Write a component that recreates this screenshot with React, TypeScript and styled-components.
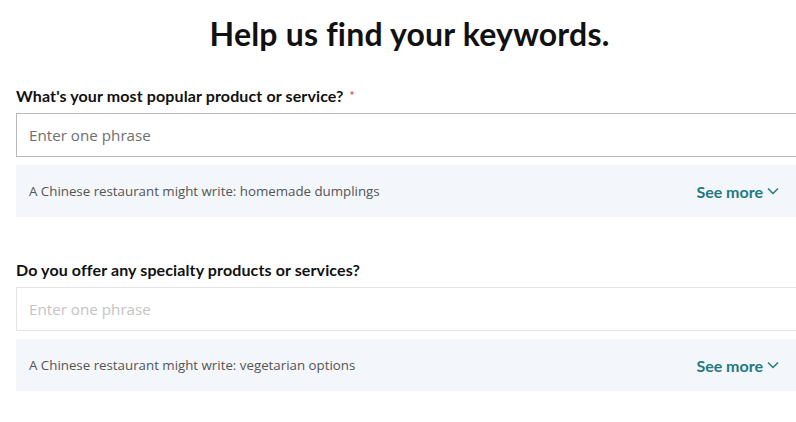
import React from "react";
import styled, { createGlobalStyle } from "styled-components";

const Global = createGlobalStyle`
  html, body { margin: 0; padding: 0; background: #fff; overflow: hidden; }
  * { box-sizing: border-box; }
`;

const Page = styled.div`
  width: 796px;
  height: 422px;
  overflow: hidden;
  padding-left: 16px;
`;

const Content = styled.div`
  width: 787px;
  display: flex;
  flex-direction: column;
`;

const Title = styled.h1`
  margin: 14px 0 0;
  text-align: center;
  font-family: "Lato", "Noto Sans", sans-serif;
  font-weight: 700;
  font-size: 32px;
  line-height: 40px;
  color: #111;
  letter-spacing: 0.2px;
`;

const Field = styled.div<{ $gap: number }>`
  margin-top: ${(p) => p.$gap}px;
  display: flex;
  flex-direction: column;
`;

const Label = styled.label`
  font-family: "Lato", "Noto Sans", sans-serif;
  font-weight: 700;
  font-size: 16px;
  line-height: 22px;
  letter-spacing: 0.12px;
  color: #111;
  margin-bottom: 6px;
`;

const Req = styled.span`
  color: #e2533f;
  margin-left: 6px;
  font-size: 12px;
  vertical-align: top;
`;

const Input = styled.input<{ $muted?: boolean }>`
  height: 44px;
  width: 100%;
  border: 1px solid ${(p) => (p.$muted ? "#e4e4e4" : "#b8b8b8")};
  border-radius: 0;
  padding: 0 12px;
  font-family: "Open Sans", "Noto Sans", sans-serif;
  font-size: 15.2px;
  color: #111;
  outline: none;
  background: #fff;
  &::placeholder {
    color: ${(p) => (p.$muted ? "#c4c4c4" : "#6f6f6f")};
  }
`;

const Hint = styled.div`
  margin-top: 8px;
  height: 52px;
  background: #f3f6fa;
  display: flex;
  align-items: center;
  justify-content: space-between;
  padding: 0 24px 0 13px;
`;

const HintText = styled.span`
  font-family: "Open Sans", "Noto Sans", sans-serif;
  font-size: 13.3px;
  color: #555;
`;

const SeeMore = styled.button`
  border: 0;
  background: none;
  padding: 0;
  display: flex;
  align-items: center;
  gap: 4px;
  font-family: "Lato", "Noto Sans", sans-serif;
  font-weight: 700;
  font-size: 16px;
  color: #1f7a80;
  cursor: pointer;
`;

const Chevron = () => (
  <svg width="12" height="8" viewBox="0 0 12 8" fill="none">
    <path d="M1 1.5 L6 6.5 L11 1.5" stroke="#1f7a80" strokeWidth="1.5" />
  </svg>
);

export default function App() {
  return (
    <Page>
      <Global />
      <Content>
        <Title>Help us find your keywords.</Title>
        <Field $gap={31}>
          <Label>
            What's your most popular product or service?<Req>*</Req>
          </Label>
          <Input placeholder="Enter one phrase" />
          <Hint>
            <HintText>A Chinese restaurant might write: homemade dumplings</HintText>
            <SeeMore>
              See more <Chevron />
            </SeeMore>
          </Hint>
        </Field>
        <Field $gap={42}>
          <Label>Do you offer any specialty products or services?</Label>
          <Input $muted placeholder="Enter one phrase" />
          <Hint>
            <HintText>A Chinese restaurant might write: vegetarian options</HintText>
            <SeeMore>
              See more <Chevron />
            </SeeMore>
          </Hint>
        </Field>
      </Content>
    </Page>
  );
}
